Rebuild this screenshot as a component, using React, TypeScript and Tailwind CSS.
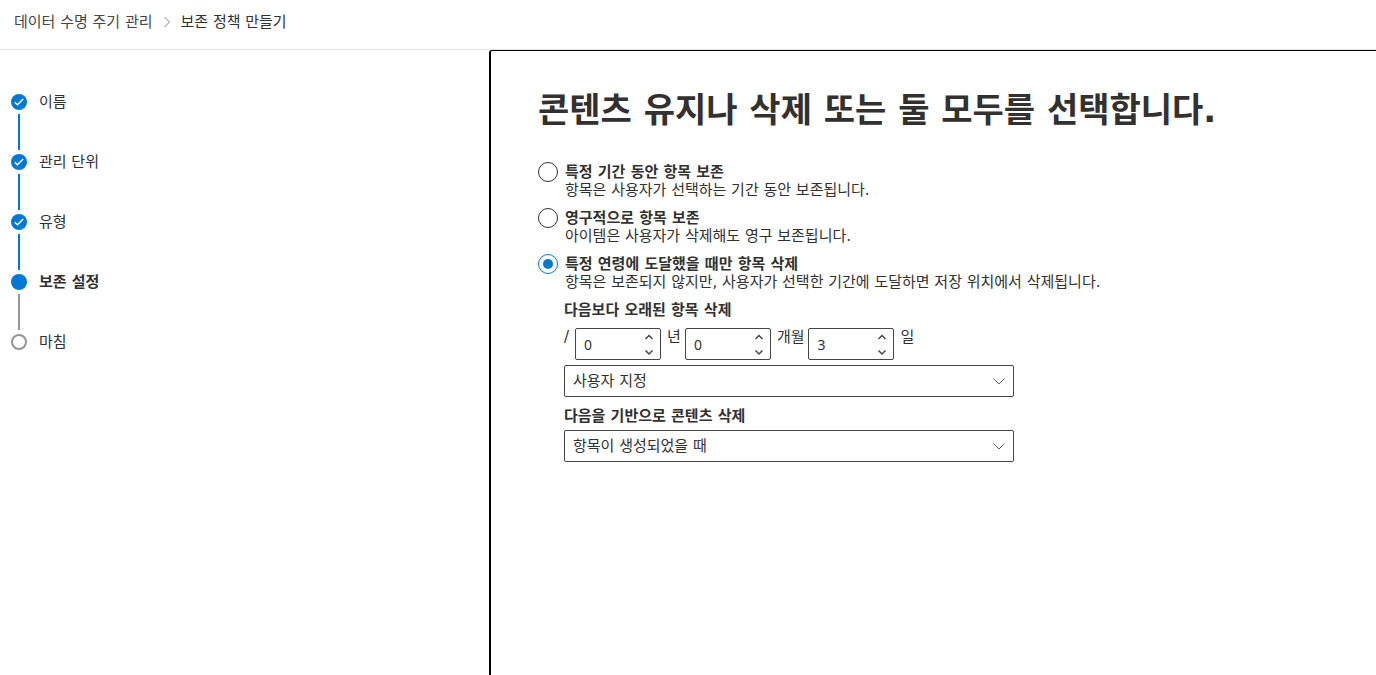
import { useState } from "react";

type StepStatus = "done" | "current" | "upcoming";

const steps: { label: string; status: StepStatus }[] = [
  { label: "이름", status: "done" },
  { label: "관리 단위", status: "done" },
  { label: "유형", status: "done" },
  { label: "보존 설정", status: "current" },
  { label: "마침", status: "upcoming" },
];

const options = [
  {
    value: "period",
    title: "특정 기간 동안 항목 보존",
    description: "항목은 사용자가 선택하는 기간 동안 보존됩니다.",
  },
  {
    value: "forever",
    title: "영구적으로 항목 보존",
    description: "아이템은 사용자가 삭제해도 영구 보존됩니다.",
  },
  {
    value: "delete",
    title: "특정 연령에 도달했을 때만 항목 삭제",
    description:
      "항목은 보존되지 않지만, 사용자가 선택한 기간에 도달하면 저장 위치에서 삭제됩니다.",
  },
];

export default function App() {
  const [selected, setSelected] = useState("delete");

  return (
    <div className="flex min-h-screen flex-col bg-white font-['DejaVu_Sans','Noto_Sans_CJK_KR',sans-serif] text-[15px] leading-[18px] text-[#323130]">
      <header className="border-b border-[#e5e5e5] px-3.5 pt-[13px] pb-[18px]">
        <nav aria-label="탐색 경로" className="flex items-center">
          <a href="#" className="text-[#484644]">
            데이터 수명 주기 관리
          </a>
          <svg
            className="mx-2 size-3 text-[#8a8886]"
            viewBox="0 0 12 12"
            fill="none"
            stroke="currentColor"
          >
            <path d="M3.5 1 8.5 6l-5 5" />
          </svg>
          <span aria-current="page">보존 정책 만들기</span>
        </nav>
      </header>

      <div className="flex flex-1">
        <aside className="w-[489px] shrink-0 px-[11px] pt-11">
          <ol>
            {steps.map((step, index) => (
              <Step
                key={step.label}
                label={step.label}
                status={step.status}
                last={index === steps.length - 1}
              />
            ))}
          </ol>
        </aside>

        <main className="min-w-0 flex-1 rounded-tl-[3px] border-t border-l-2 border-black px-[47px] pt-[35px]">
          <h1 className="text-[34px] leading-[48px] font-bold">
            콘텐츠 유지나 삭제 또는 둘 모두를 선택합니다.
          </h1>

          <div className="mt-7 grid gap-[9px]">
            {options.map((option) => (
              <label key={option.value} className="flex gap-[7px]">
                <input
                  type="radio"
                  name="retention"
                  value={option.value}
                  checked={selected === option.value}
                  onChange={() => setSelected(option.value)}
                  className="grid size-5 shrink-0 appearance-none place-items-center rounded-full border border-[#323130] checked:border-[#0078d4] checked:before:size-2.5 checked:before:rounded-full checked:before:bg-[#0078d4]"
                />
                <span className="pt-px">
                  <span className="block font-bold">{option.title}</span>
                  <span className="block">{option.description}</span>
                </span>
              </label>
            ))}
          </div>

          <div className="mt-2.5 ml-[26px] max-w-[450px]">
            <p className="font-bold">다음보다 오래된 항목 삭제</p>
            <div className="mt-[9px] flex gap-1">
              <span className="mr-0.5">/</span>
              <SpinField label="년" initial={0} />
              <SpinField label="개월" initial={0} />
              <SpinField label="일" initial={3} />
            </div>
            <div className="mt-[5px]">
              <Dropdown id="duration" label="기간" options={["사용자 지정"]} />
            </div>
            <label htmlFor="basis" className="mt-2.5 mb-[5px] block font-bold">
              다음을 기반으로 콘텐츠 삭제
            </label>
            <Dropdown id="basis" options={["항목이 생성되었을 때"]} />
          </div>
        </main>
      </div>
    </div>
  );
}

function Step({
  label,
  status,
  last,
}: {
  label: string;
  status: StepStatus;
  last: boolean;
}) {
  return (
    <li
      className="flex gap-3"
      aria-current={status === "current" ? "step" : undefined}
    >
      <div className="flex flex-col items-center">
        <svg className="size-4" viewBox="0 0 16 16" fill="none">
          {status === "upcoming" ? (
            <circle cx="8" cy="8" r="7" stroke="#979593" strokeWidth="2" />
          ) : (
            <circle cx="8" cy="8" r="8" fill="#0078d4" />
          )}
          {status === "done" ? (
            <path d="m3.8 8.2 2.6 2.6 5.8-5.8" stroke="#fff" strokeWidth="1.5" />
          ) : null}
        </svg>
        {last ? null : (
          <div
            className={`my-1 h-9 w-0.5 ${
              status === "done" ? "bg-[#0078d4]" : "bg-[#979593]"
            }`}
          />
        )}
      </div>
      <span
        className={`leading-4 ${status === "current" ? "font-bold" : ""}`}
      >
        {label}
      </span>
    </li>
  );
}

function SpinField({ label, initial }: { label: string; initial: number }) {
  const [value, setValue] = useState(initial);

  return (
    <div className="flex gap-1.5">
      <div className="flex h-8 w-[86px] rounded-xs border border-[#484644]">
        <input
          type="text"
          inputMode="numeric"
          aria-label={label}
          value={value}
          onChange={(event) => setValue(Number(event.target.value) || 0)}
          className="min-w-0 flex-1 pt-0.5 pl-2 font-['Noto_Sans',sans-serif] text-sm outline-none"
        />
        <div className="flex w-[22px] flex-col">
          <SpinButton
            label={`${label} 늘리기`}
            path="M2.5 8 6 4.5 9.5 8"
            onClick={() => setValue(value + 1)}
          />
          <SpinButton
            label={`${label} 줄이기`}
            path="M2.5 4.5 6 8l3.5-3.5"
            onClick={() => setValue(Math.max(0, value - 1))}
          />
        </div>
      </div>
      <span>{label}</span>
    </div>
  );
}

function SpinButton({
  label,
  path,
  onClick,
}: {
  label: string;
  path: string;
  onClick: () => void;
}) {
  return (
    <button
      type="button"
      aria-label={label}
      onClick={onClick}
      className="flex flex-1 items-center justify-center"
    >
      <svg
        className="size-3"
        viewBox="0 0 12 12"
        fill="none"
        stroke="#484644"
        strokeWidth="1.5"
      >
        <path d={path} />
      </svg>
    </button>
  );
}

function Dropdown({
  id,
  label,
  options,
}: {
  id: string;
  label?: string;
  options: string[];
}) {
  return (
    <div className="relative">
      <select
        id={id}
        aria-label={label}
        className="block h-8 w-full appearance-none rounded-xs border border-[#484644] bg-white pr-8 pl-2"
      >
        {options.map((option) => (
          <option key={option}>{option}</option>
        ))}
      </select>
      <svg
        className="pointer-events-none absolute top-2.5 right-[9px] size-3"
        viewBox="0 0 12 12"
        fill="none"
        stroke="#605e5c"
      >
        <path d="M.5 3.5 6 9l5.5-5.5" />
      </svg>
    </div>
  );
}
